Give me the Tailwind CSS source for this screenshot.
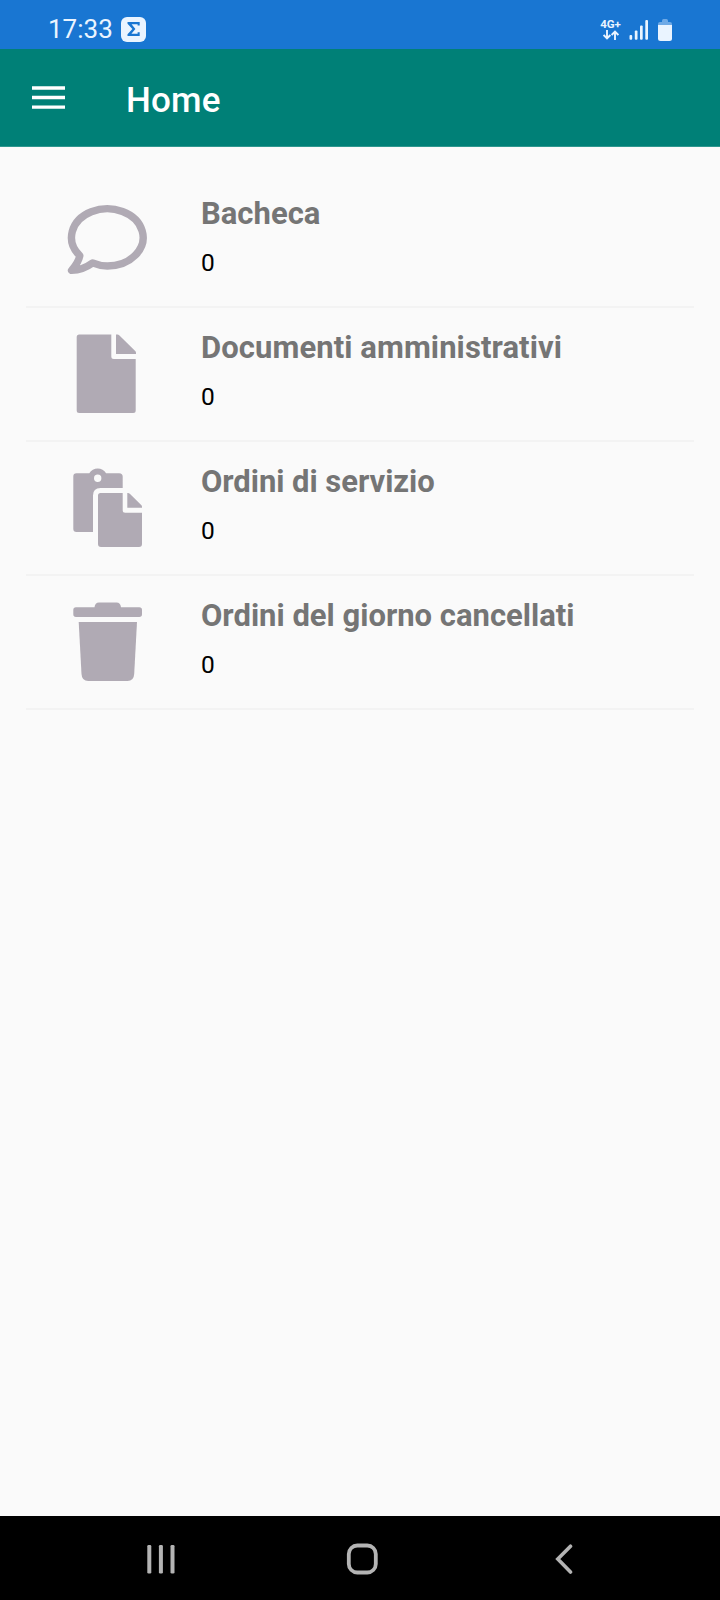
<!DOCTYPE html>
<html lang="it">
<head>
  <meta charset="UTF-8">
  <meta name="viewport" content="width=device-width, initial-scale=1.0">
  <title>Home</title>
  <script src="https://cdn.jsdelivr.net/npm/@tailwindcss/browser@4"></script>
  <style>
    body {
      font-family: Roboto, 'Liberation Sans', sans-serif;
    }
  </style>
</head>
<body class="bg-[#fafafa]">
  <div class="flex flex-col h-[1600px] w-[720px] overflow-hidden">
    <!-- Status bar -->
    <div class="flex items-center justify-between h-[49px] bg-[#1976d2] pl-12 pr-12 pt-[11px] text-[#eaf4ff]">
      <div class="flex items-center gap-[9px]">
        <span class="w-16 -mt-[2px] text-[26px] leading-none">17:33</span>
        <svg class="size-[25px] -mt-px" viewBox="0 0 25 25">
          <rect width="25" height="25" rx="6" fill="#eaf4ff"/>
          <path d="M6.5 5H18.7V8.6H16.6V7.2H10.6L14.4 11.9L10.4 16.7H16.6V15.3H18.7V18.9H6.5V17.2L11.4 11.9L6.5 6.7Z" fill="#1976d2"/>
        </svg>
      </div>
      <div class="flex items-center -mt-px">
        <div class="flex flex-col items-center w-[22px] mr-[7px]">
          <span class="-ml-px text-[11.5px] leading-[11px] font-bold">4G+</span>
          <svg class="w-4 h-[10px] -ml-px" viewBox="0 0 16 10" fill="none" stroke="currentColor" stroke-width="1.9">
            <path d="M4 0V8.5M.6 5L4 8.5L7.4 5M12 10V1.5M8.6 5L12 1.5L15.4 5"/>
          </svg>
        </div>
        <svg class="w-[20px] h-[20px] mr-[9px]" viewBox="0 0 20 20" fill="currentColor">
          <rect x="0.5" y="15" width="2.7" height="4.7" rx="1"/>
          <rect x="5.8" y="10.5" width="2.7" height="9.2" rx="1"/>
          <rect x="11" y="5.5" width="2.7" height="14.2" rx="1"/>
          <rect x="16.3" y="0" width="2.7" height="19.7" rx="1"/>
        </svg>
        <svg class="w-[14px] h-[22px]" viewBox="0 0 14 22">
          <path d="M0 7V5Q0 3 2 3H4V2Q4 0 5.5 0H8.5Q10 0 10 2V3H12Q14 3 14 5V7Z" fill="#6ea9e6"/>
          <path d="M0 6H14V19.5Q14 22 11.5 22H2.5Q0 22 0 19.5Z" fill="#eaf4ff"/>
        </svg>
      </div>
    </div>

    <!-- App bar -->
    <header class="flex items-center h-[98px] bg-[#008077] border-b border-[#2f978f] px-8 text-white">
      <svg class="w-[33px] h-[23px]" viewBox="0 0 33 23" fill="currentColor">
        <path d="M0 .3H33V3.7H0ZM0 9.8H33V13.2H0ZM0 19.4H33V22.8H0Z"/>
      </svg>
      <h1 class="ml-[61px] text-[35px] leading-none font-medium tracking-[0.2px] mt-[5px]">Home</h1>
    </header>

    <!-- Sections -->
    <main class="flex-1 px-[26px] pt-[27px]">
      <div class="flex h-[134px] border-b-2 border-[#f3f3f3] pl-[41px] pt-[26px]">
        <svg class="size-20 shrink-0" viewBox="0 0 80 80" fill="none" stroke="#b0aab4" stroke-width="7.4" stroke-linejoin="round">
          <path d="M25.5 62.9C31 65.2 35 66 40.3 66A35.8 28.6 0 1 0 12.8 55.7Q11.5 62.3 4.6 70.4C13 70.1 20 66.9 25.5 62.9Z"/>
        </svg>
        <div class="ml-[54px] -mt-[4px]">
          <h2 class="text-[31px] leading-[36px] font-bold text-[#757575]">Bacheca</h2>
          <p class="mt-[17px] text-[24.5px] leading-[28px] text-black">0</p>
        </div>
      </div>
      <div class="flex h-[134px] border-b-2 border-[#f3f3f3] pl-[41px] pt-[26px]">
        <svg class="size-20 shrink-0" viewBox="0 0 80 80" fill="#b0aab4">
          <path d="M12.2 .5H44.3V22.5Q44.3 25 46.8 25H68.7V76.5Q68.7 79 66.2 79H12.2Q9.7 79 9.7 76.5V3Q9.7 .5 12.2 .5Z"/>
          <path d="M49 .5H50.5Q51.5 .5 52.2 1.2L68.2 17Q69 17.8 69 18.8V20H49Z"/>
        </svg>
        <div class="ml-[54px] -mt-[4px]">
          <h2 class="text-[31px] leading-[36px] font-bold tracking-[0.08px] text-[#757575]">Documenti amministrativi</h2>
          <p class="mt-[17px] text-[24.5px] leading-[28px] text-black">0</p>
        </div>
      </div>
      <div class="flex h-[134px] border-b-2 border-[#f3f3f3] pl-[41px] pt-[26px]">
        <svg class="size-20 shrink-0" viewBox="0 0 80 80" fill="#b0aab4">
          <path fill-rule="evenodd" d="M9.5 5.3H22.3A9.8 9.8 0 0 1 39.1 5.3H52.2Q55.7 5.3 55.7 8.8V20H33.5Q26 20 26 27.5V64H9.5Q6.3 64 6.3 60.8V8.5Q6.3 5.3 9.5 5.3ZM30.7 6.5A3.7 3.7 0 1 0 30.7 13.9A3.7 3.7 0 1 0 30.7 6.5Z"/>
          <path d="M33.5 25H55.7V42.2Q55.7 44.7 58.2 44.7H75V76Q75 79 72 79H34Q31 79 31 76V27.5Q31 25 33.5 25Z"/>
          <path d="M60.3 25H61Q62 25 62.8 25.8L74.2 37Q75 37.8 75 38.8V39.7H60.3Z"/>
        </svg>
        <div class="ml-[54px] -mt-[4px]">
          <h2 class="text-[31px] leading-[36px] font-bold tracking-[-0.04px] text-[#757575]">Ordini di servizio</h2>
          <p class="mt-[17px] text-[24.5px] leading-[28px] text-black">0</p>
        </div>
      </div>
      <div class="flex h-[134px] border-b-2 border-[#f3f3f3] pl-[41px] pt-[26px]">
        <svg class="size-20 shrink-0" viewBox="0 0 80 80" fill="#b0aab4">
          <path d="M9 5.3H27.5Q28 .5 32 .5H49.5Q53.5 .5 54 5.3H72.3Q75 5.3 75 8V12.3Q75 15 72.3 15H9Q6.3 15 6.3 12.3V8Q6.3 5.3 9 5.3Z"/>
          <path d="M11.7 20H70L67.2 72Q66.8 79 60.5 79H21.2Q14.9 79 14.5 72Z"/>
        </svg>
        <div class="ml-[54px] -mt-[4px]">
          <h2 class="text-[31px] leading-[36px] font-bold text-[#757575]">Ordini del giorno cancellati</h2>
          <p class="mt-[17px] text-[24.5px] leading-[28px] text-black">0</p>
        </div>
      </div>
    </main>

    <!-- Navigation bar -->
    <nav class="flex items-center h-[84px] bg-black pl-[147px] pt-px text-[#b4b4b4]">
      <svg class="w-7 h-8" viewBox="0 0 28 32" fill="currentColor">
        <rect x="0.3" y="2" width="4" height="28.5" rx="1.3"/>
        <rect x="11.9" y="2" width="4" height="28.5" rx="1.3"/>
        <rect x="23.5" y="2" width="4" height="28.5" rx="1.3"/>
      </svg>
      <svg class="ml-[171px] w-8 h-8" viewBox="0 0 32 32" fill="none" stroke="currentColor" stroke-width="3.8">
        <rect x="2.8" y="2.5" width="27" height="27" rx="8.5"/>
      </svg>
      <svg class="ml-[177px] w-[18px] h-8" viewBox="0 0 18 32" fill="none" stroke="currentColor" stroke-width="3.6" stroke-linecap="round">
        <path d="M15.5 3.2L2.8 16L15.5 29"/>
      </svg>
    </nav>
  </div>
</body>
</html>
